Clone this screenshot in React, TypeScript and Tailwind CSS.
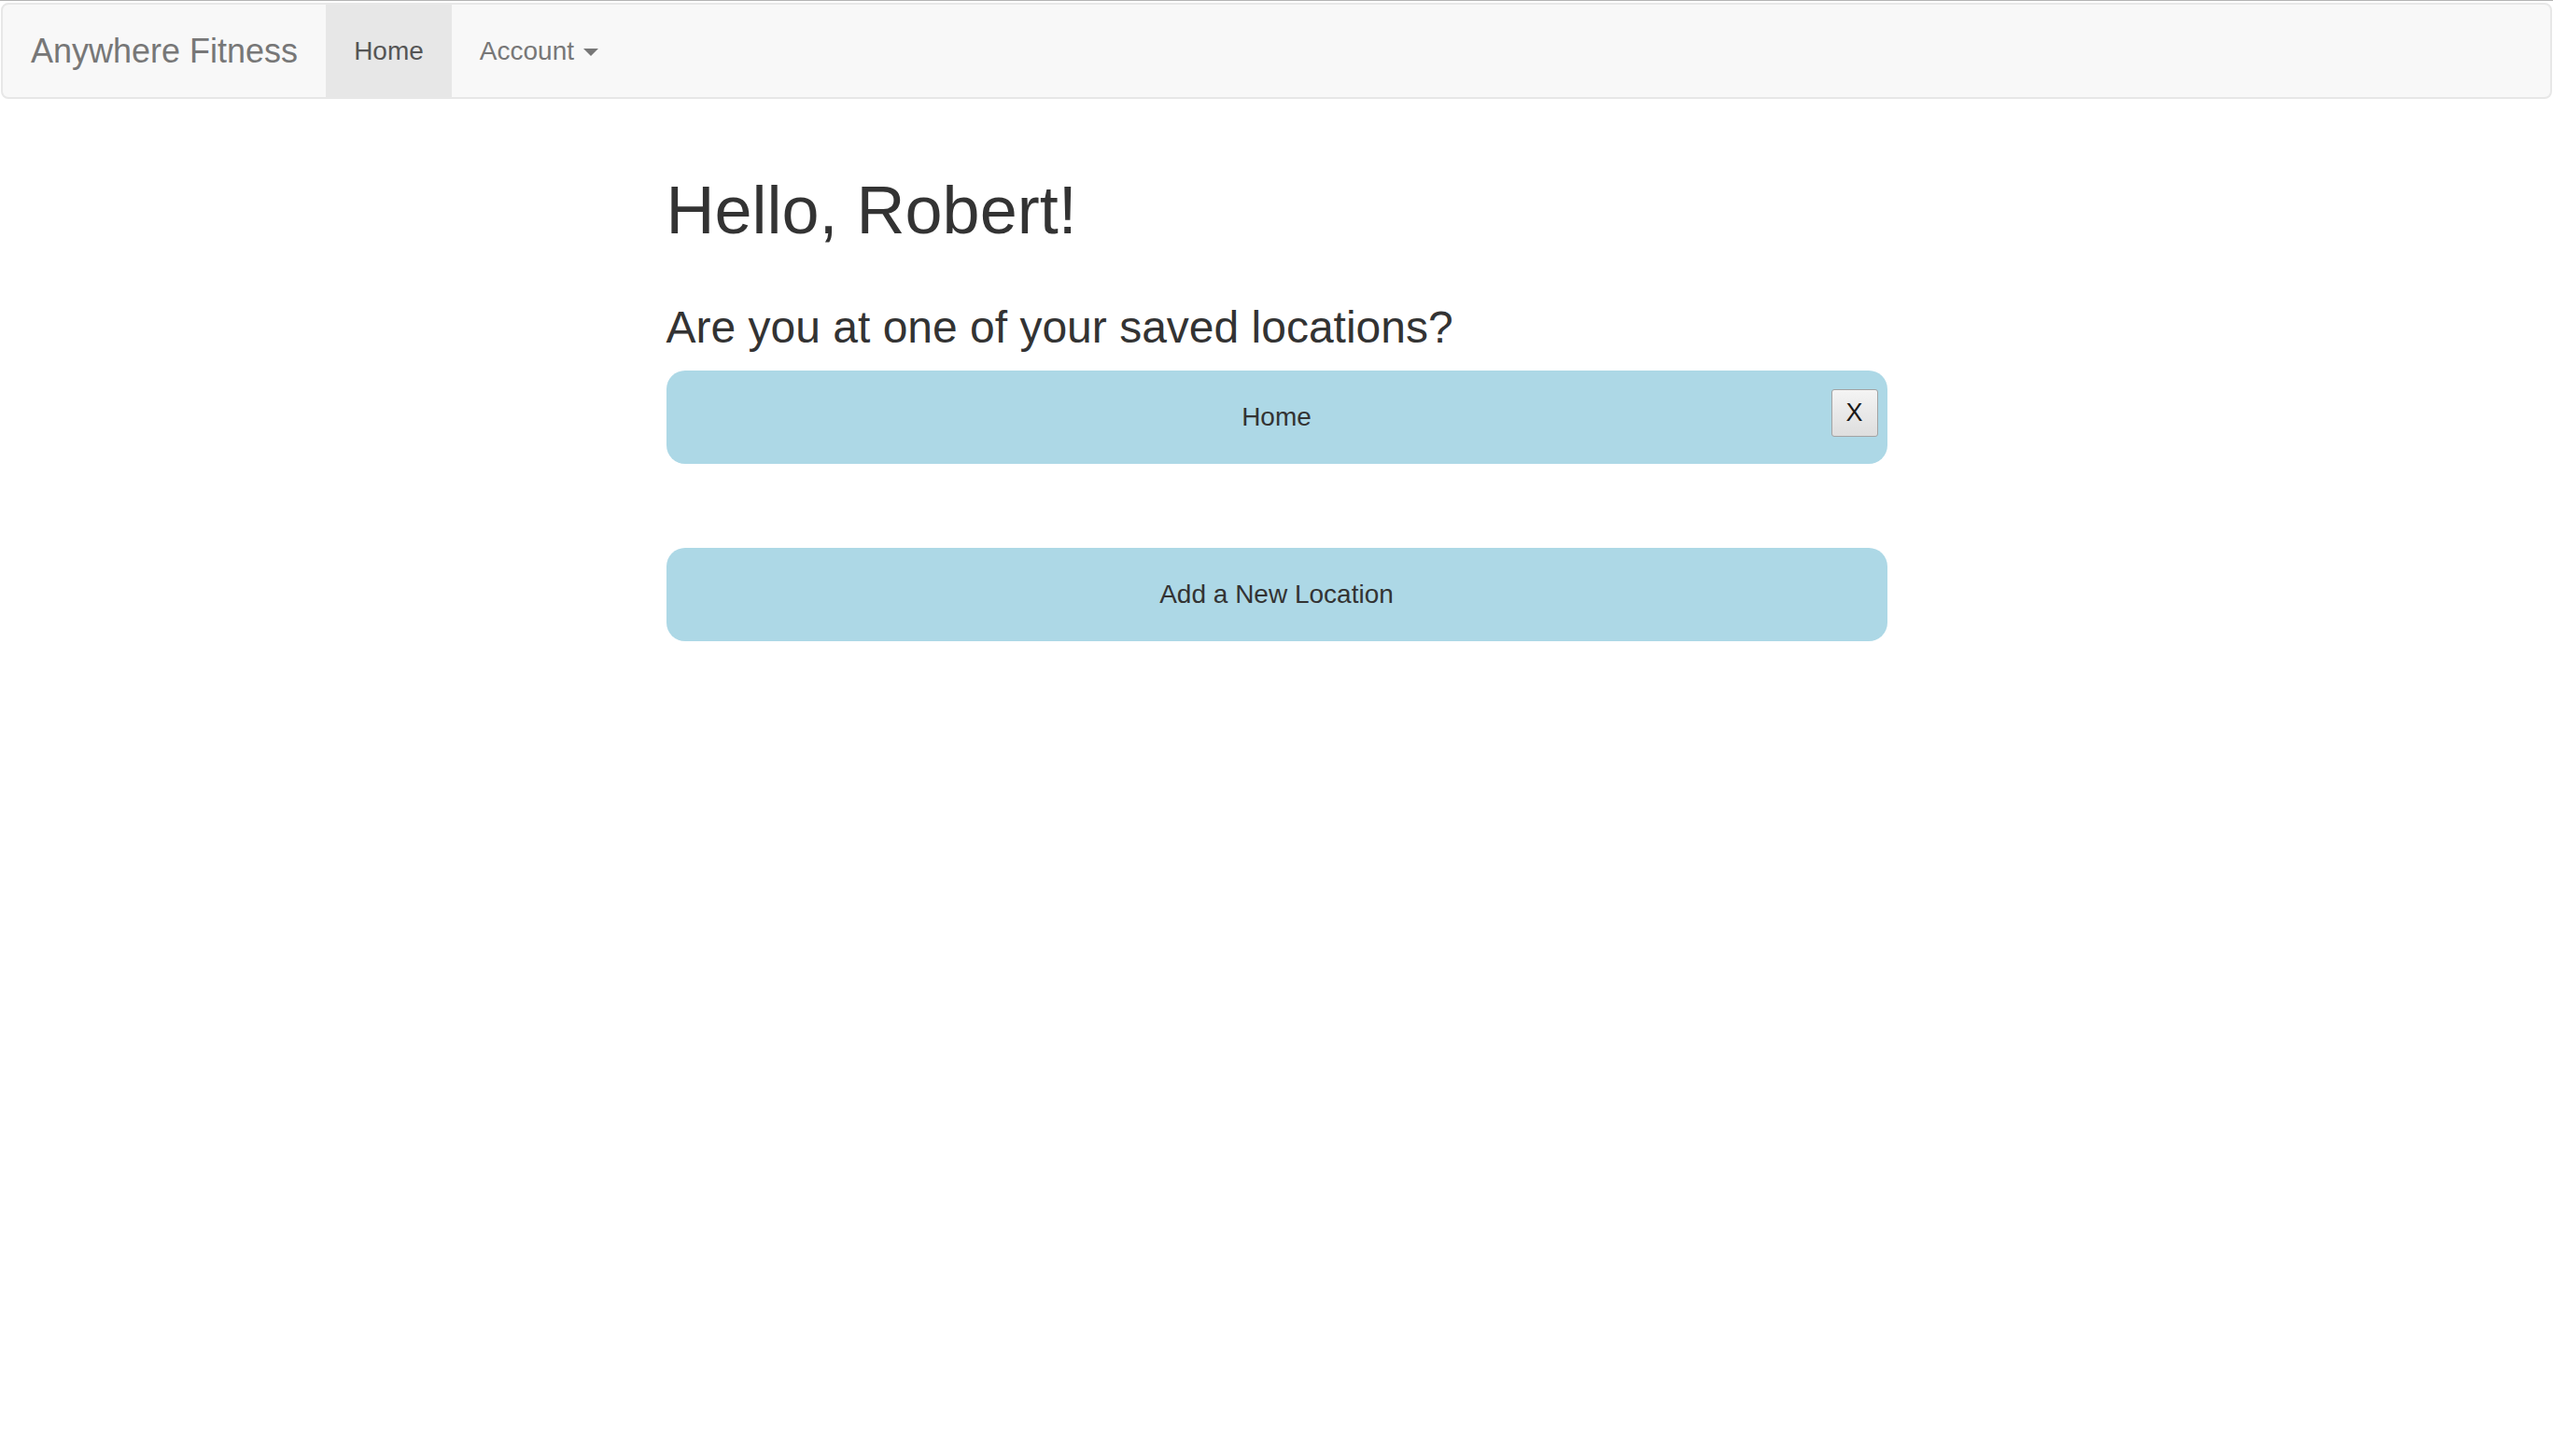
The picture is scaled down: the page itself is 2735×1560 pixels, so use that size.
import React from "react";

const font = { fontFamily: '"Liberation Sans", Arial, Helvetica, sans-serif' };

function Navbar() {
  return (
    <nav className="mx-px mt-[2px] flex h-[103px] rounded-[8px] border-2 border-[#e7e7e7] bg-[#f8f8f8]">
      <a className="flex items-center px-[30px] text-[36px] text-[#777777]">
        Anywhere Fitness
      </a>
      <a className="flex items-center bg-[#e7e7e7] px-[30px] text-[28px] text-[#555555]">
        Home
      </a>
      <a className="flex items-center px-[30px] text-[28px] text-[#777777]">
        Account
        <span className="ml-[10px] mt-[2px] h-0 w-0 border-x-[8px] border-t-[8px] border-x-transparent border-t-[#777777]" />
      </a>
    </nav>
  );
}

function LocationCard({
  label,
  onRemove,
}: {
  label: string;
  onRemove?: () => void;
}) {
  return (
    <div className="relative flex h-[100px] items-center justify-center rounded-[20px] bg-[#add8e6] text-[28px] text-[#333333]">
      {label}
      {onRemove && (
        <button
          onClick={onRemove}
          className="absolute right-[10px] top-[20px] flex h-[51px] w-[50px] items-center justify-center rounded-[3px] border border-[#a3a3a3] bg-gradient-to-b from-[#f4f4f4] to-[#dedede] text-[27px] text-[#1a1a1a]"
        >
          X
        </button>
      )}
    </div>
  );
}

export default function App() {
  return (
    <div className="min-h-screen bg-white text-[#333333]" style={font}>
      <div className="h-px bg-[#b4b4b4]" />
      <Navbar />

      <main className="mx-auto mt-[80px] w-[1308px]">
        <h1 className="text-[72px] font-medium leading-[79px]">Hello, Robert!</h1>
        <h3 className="mt-[59px] text-[48px] font-medium leading-[53px]">
          Are you at one of your saved locations?
        </h3>

        <div className="mt-[20px]">
          <LocationCard label="Home" onRemove={() => {}} />
        </div>

        <div className="mt-[90px]">
          <LocationCard label="Add a New Location" />
        </div>
      </main>
    </div>
  );
}
